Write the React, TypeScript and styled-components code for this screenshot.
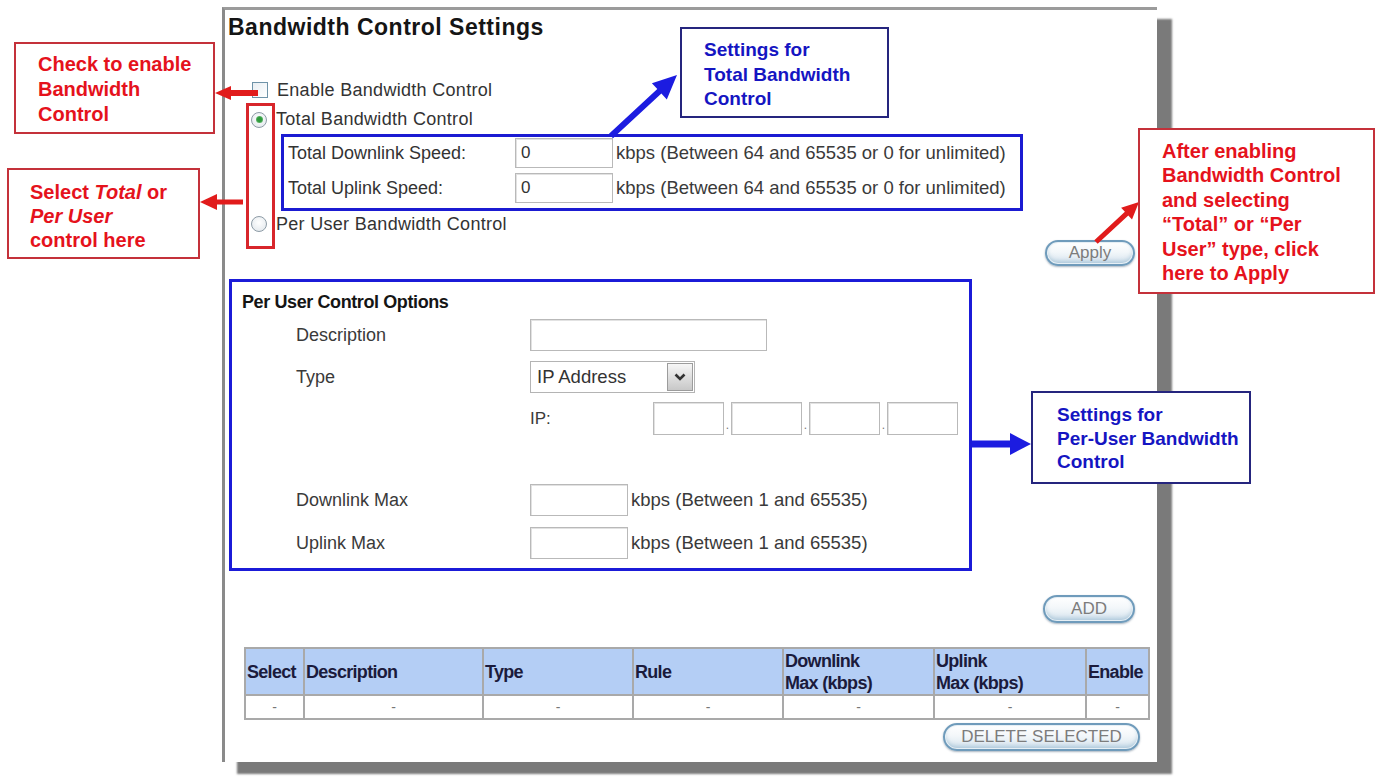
import React from 'react';
import styled, { createGlobalStyle } from 'styled-components';

const GlobalStyle = createGlobalStyle`
  html, body {
    margin: 0;
    padding: 0;
    background: #fff;
  }
  body {
    font-family: "Liberation Sans", Arial, sans-serif;
    color: #333;
  }
`;

// arrow polygon from (x1,y1) to the tip (x2,y2)
const arrowPoints = (
  x1: number,
  y1: number,
  x2: number,
  y2: number,
  w: number,
  L: number,
  h: number
): string => {
  const dx = x2 - x1;
  const dy = y2 - y1;
  const len = Math.hypot(dx, dy);
  const ux = dx / len;
  const uy = dy / len;
  const px = -uy;
  const py = ux;
  const bx = x2 - ux * L;
  const by = y2 - uy * L;
  const pts = [
    [x1 + (px * w) / 2, y1 + (py * w) / 2],
    [bx + (px * w) / 2, by + (py * w) / 2],
    [bx + px * h, by + py * h],
    [x2, y2],
    [bx - px * h, by - py * h],
    [bx - (px * w) / 2, by - (py * w) / 2],
    [x1 - (px * w) / 2, y1 - (py * w) / 2],
  ];
  return pts.map((p) => p.map((n) => n.toFixed(1)).join(',')).join(' ');
};

const arrows = [
  { color: '#e11b1b', pts: arrowPoints(258, 93, 215, 93, 6, 16, 7) },
  { color: '#e11b1b', pts: arrowPoints(243, 202, 200, 202, 5, 17, 8) },
  { color: '#1c1ce0', pts: arrowPoints(611, 136, 677, 75, 6, 24, 11) },
  { color: '#e11b1b', pts: arrowPoints(1096, 242, 1139, 202, 5, 17, 8) },
  { color: '#1c1ce0', pts: arrowPoints(972, 444, 1031, 444, 7, 21, 11) },
];

const App: React.FC = () => {
  return (
    <Page>
      <GlobalStyle />
      <Panel>
        <Title>Bandwidth Control Settings</Title>

        <OptionRow $top={34} $left={27} $h={30}>
          <Checkbox />
          <OptionText>Enable Bandwidth Control</OptionText>
        </OptionRow>
        <OptionRow $left={26} $h={29}>
          <Radio $on />
          <OptionText>Total Bandwidth Control</OptionText>
        </OptionRow>

        <TotalBox>
          <SpeedRow>
            <SpeedLabel>Total Downlink Speed:</SpeedLabel>
            <TextInput $w={98} $h={30} defaultValue="0" />
            <Unit>kbps (Between 64 and 65535 or 0 for unlimited)</Unit>
          </SpeedRow>
          <SpeedRow>
            <SpeedLabel>Total Uplink Speed:</SpeedLabel>
            <TextInput $w={98} $h={30} defaultValue="0" />
            <Unit>kbps (Between 64 and 65535 or 0 for unlimited)</Unit>
          </SpeedRow>
        </TotalBox>

        <OptionRow $left={26} $h={26}>
          <Radio />
          <OptionText>Per User Bandwidth Control</OptionText>
        </OptionRow>

        <ButtonRow $top={3} $right={22}>
          <PillButton $w={90} $h={26}>Apply</PillButton>
        </ButtonRow>

        <PerUserBox>
          <BoxTitle>Per User Control Options</BoxTitle>
          <FormRow $top={4} $h={32}>
            <FormLabel>Description</FormLabel>
            <TextInput $w={237} $h={32} />
          </FormRow>
          <FormRow $top={10} $h={32}>
            <FormLabel>Type</FormLabel>
            <SelectBox>
              <SelectText>IP Address</SelectText>
              <SelectArrow>
                <svg width="14" height="10" viewBox="0 0 14 10">
                  <path d="M2.5 2.5 L7 7 L11.5 2.5" fill="none" stroke="#333" strokeWidth="2.6" />
                </svg>
              </SelectArrow>
            </SelectBox>
          </FormRow>
          <FormRow $top={9} $h={33}>
            <FormLabel />
            <IpLabel>IP:</IpLabel>
            <TextInput $w={71} $h={33} />
            <IpDot>.</IpDot>
            <TextInput $w={71} $h={33} />
            <IpDot>.</IpDot>
            <TextInput $w={71} $h={33} />
            <IpDot>.</IpDot>
            <TextInput $w={71} $h={33} />
          </FormRow>
          <FormRow $top={49} $h={32}>
            <FormLabel>Downlink Max</FormLabel>
            <TextInput $w={98} $h={32} />
            <Unit>kbps (Between 1 and 65535)</Unit>
          </FormRow>
          <FormRow $top={11} $h={32}>
            <FormLabel>Uplink Max</FormLabel>
            <TextInput $w={98} $h={32} />
            <Unit>kbps (Between 1 and 65535)</Unit>
          </FormRow>
        </PerUserBox>

        <ButtonRow $top={24} $right={22}>
          <PillButton $w={92} $h={28}>ADD</PillButton>
        </ButtonRow>

        <RuleTable>
          <colgroup>
            <col style={{ width: 59 }} />
            <col style={{ width: 179 }} />
            <col style={{ width: 150 }} />
            <col style={{ width: 150 }} />
            <col style={{ width: 151 }} />
            <col style={{ width: 152 }} />
            <col style={{ width: 63 }} />
          </colgroup>
          <thead>
            <tr>
              <Th>Select</Th>
              <Th>Description</Th>
              <Th>Type</Th>
              <Th>Rule</Th>
              <Th>
                Downlink
                <br />
                Max (kbps)
              </Th>
              <Th>
                Uplink
                <br />
                Max (kbps)
              </Th>
              <Th>Enable</Th>
            </tr>
          </thead>
          <tbody>
            <tr>
              {Array.from({ length: 7 }).map((_, i) => (
                <Td key={i}>-</Td>
              ))}
            </tr>
          </tbody>
        </RuleTable>

        <ButtonRow $top={3} $right={17}>
          <PillButton $w={197} $h={28}>DELETE SELECTED</PillButton>
        </ButtonRow>
      </Panel>

      <RadioMarker />

      <Arrows width="1385" height="778" viewBox="0 0 1385 778">
        {arrows.map((a, i) => (
          <polygon key={i} points={a.pts} fill={a.color} />
        ))}
      </Arrows>

      <Callout $tone="red" $x={14} $y={42} $w={201} $h={92} $pt={8} $pl={22} $lh={25}>
        Check to enable
        <br />
        Bandwidth
        <br />
        Control
      </Callout>
      <Callout $tone="red" $x={7} $y={168} $w={193} $h={91} $pt={10} $pl={21} $lh={24}>
        Select <i>Total</i> or
        <br />
        <i>Per User</i>
        <br />
        control here
      </Callout>
      <Callout $tone="red" $x={1138} $y={128} $w={237} $h={166} $pt={9} $pl={22} $lh={24.4}>
        After enabling
        <br />
        Bandwidth Control
        <br />
        and selecting
        <br />
        “Total” or “Per
        <br />
        User” type, click
        <br />
        here to Apply
      </Callout>
      <Callout $tone="blue" $x={680} $y={27} $w={209} $h={91} $pt={9} $pl={22} $lh={24.5}>
        Settings for
        <br />
        Total Bandwidth
        <br />
        Control
      </Callout>
      <Callout $tone="blue" $x={1031} $y={391} $w={220} $h={93} $pt={10} $pl={24} $lh={23.5}>
        Settings for
        <br />
        Per-User Bandwidth
        <br />
        Control
      </Callout>
    </Page>
  );
};

// Styles
const Page = styled.div`
  position: relative;
  width: 1385px;
  height: 778px;
  overflow: hidden;
  background: #fff;
  padding: 7px 0 0 222px;
  box-sizing: border-box;
`;

const Panel = styled.div`
  width: 932px;
  height: 752px;
  border-top: 3px solid #9b9b9b;
  border-left: 3px solid #8a8a8a;
  background: #fff;
  box-shadow: 15px 12px 2px #7a7a7a;
  display: flex;
  flex-direction: column;
  align-items: flex-start;
`;

const Title = styled.h1`
  margin: 3px 0 0 3px;
  height: 28px;
  line-height: 28px;
  font-size: 23px;
  font-weight: bold;
  letter-spacing: 0.5px;
  color: #151515;
`;

const OptionRow = styled.div<{ $top?: number; $left: number; $h: number }>`
  display: flex;
  align-items: center;
  gap: 9px;
  height: ${(p) => p.$h}px;
  margin-top: ${(p) => p.$top ?? 0}px;
  margin-left: ${(p) => p.$left}px;
`;

const OptionText = styled.span`
  font-size: 18px;
  color: #333;
  letter-spacing: 0.3px;
`;

const Checkbox = styled.span`
  width: 16px;
  height: 16px;
  box-sizing: border-box;
  border: 1px solid #6f93a8;
  background: linear-gradient(135deg, #e9eef2, #ffffff);
`;

const Radio = styled.span<{ $on?: boolean }>`
  width: 16px;
  height: 16px;
  box-sizing: border-box;
  border-radius: 50%;
  border: 1px solid #8d9ba6;
  background: radial-gradient(circle at 50% 40%, #ffffff 0%, #dfe5ea 100%);
  display: inline-flex;
  align-items: center;
  justify-content: center;

  &::after {
    content: '';
    width: 7px;
    height: 7px;
    border-radius: 50%;
    background: ${(p) => (p.$on ? 'radial-gradient(circle, #2f9a3c 40%, #8fd09a 100%)' : 'transparent')};
  }
`;

const TotalBox = styled.div`
  margin-left: 56px;
  width: 742px;
  height: 77px;
  box-sizing: border-box;
  border: 3px solid #1b1bd2;
  padding: 1px 0 0 4px;
  display: flex;
  flex-direction: column;
  gap: 5px;
`;

const SpeedRow = styled.div`
  display: flex;
  align-items: center;
  height: 30px;
`;

const SpeedLabel = styled.span`
  width: 227px;
  font-size: 18px;
  color: #333;
`;

const TextInput = styled.input<{ $w: number; $h: number }>`
  width: ${(p) => p.$w}px;
  height: ${(p) => p.$h}px;
  box-sizing: border-box;
  border: 1px solid #b9b9b9;
  box-shadow: inset 1px 1px 0 #e2e2e2;
  padding: 0 5px;
  font-family: "Liberation Sans", Arial, sans-serif;
  font-size: 17px;
  color: #333;
  background: #fff;
  outline: none;
  flex: none;
`;

const Unit = styled.span`
  margin-left: 3px;
  font-size: 18.5px;
  color: #3a3a3a;
  white-space: nowrap;
`;

const ButtonRow = styled.div<{ $top: number; $right: number }>`
  align-self: flex-end;
  margin-top: ${(p) => p.$top}px;
  margin-right: ${(p) => p.$right}px;
  display: flex;
`;

const PillButton = styled.button<{ $w: number; $h: number }>`
  width: ${(p) => p.$w}px;
  height: ${(p) => p.$h}px;
  padding: 0;
  border-radius: 999px;
  border: 2px solid #6f9bbb;
  background: linear-gradient(#ffffff 0%, #f3f7fa 45%, #d6e4ee 100%);
  box-shadow: inset 0 0 0 1px #e6eff5, inset 0 -3px 4px rgba(95, 145, 180, 0.35), 0 1px 2px rgba(40, 70, 100, 0.4);
  font-family: "Liberation Sans", Arial, sans-serif;
  font-size: 17px;
  color: #7c7c7c;
  cursor: pointer;
`;

const PerUserBox = styled.div`
  margin-top: 13px;
  margin-left: 4px;
  width: 743px;
  height: 292px;
  box-sizing: border-box;
  border: 3px solid #1b1bd8;
  padding: 7px 0 0 10px;
  display: flex;
  flex-direction: column;
`;

const BoxTitle = styled.div`
  height: 26px;
  line-height: 26px;
  font-size: 18px;
  font-weight: bold;
  letter-spacing: -0.4px;
  color: #151515;
`;

const FormRow = styled.div<{ $top: number; $h: number }>`
  display: flex;
  align-items: center;
  height: ${(p) => p.$h}px;
  margin-top: ${(p) => p.$top}px;
  margin-left: 54px;
`;

const FormLabel = styled.span`
  width: 234px;
  flex: none;
  font-size: 18px;
  color: #3a3a3a;
`;

const SelectBox = styled.div`
  width: 165px;
  height: 32px;
  box-sizing: border-box;
  border: 1px solid #b4b4b4;
  display: flex;
  align-items: center;
  padding: 0 1px 0 6px;
  background: #fff;
`;

const SelectText = styled.span`
  font-size: 18.5px;
  color: #333;
`;

const SelectArrow = styled.span`
  margin-left: auto;
  width: 26px;
  height: 28px;
  box-sizing: border-box;
  border: 1px solid #9c9c9c;
  background: linear-gradient(#f6f6f6, #c8c8c8);
  display: flex;
  align-items: center;
  justify-content: center;
`;

const IpLabel = styled.span`
  width: 123px;
  flex: none;
  font-size: 17px;
  color: #3a3a3a;
`;

const IpDot = styled.span`
  width: 7px;
  align-self: flex-end;
  text-align: center;
  font-size: 12px;
  line-height: 12px;
  color: #777;
  margin-bottom: 4px;
`;

const RuleTable = styled.table`
  margin-top: 24px;
  margin-left: 19px;
  width: 904px;
  table-layout: fixed;
  border-collapse: collapse;
  border: 2px solid #a8a8a8;
`;

const Th = styled.th`
  height: 45px;
  padding: 0 1px;
  background: #b4cef5;
  border: 2px solid #a9a9a9;
  text-align: left;
  vertical-align: middle;
  font-size: 18px;
  font-weight: bold;
  letter-spacing: -0.7px;
  line-height: 22px;
  color: #1b1b3c;
  white-space: nowrap;
`;

const Td = styled.td`
  height: 22px;
  padding: 0;
  border: 2px solid #a9a9a9;
  text-align: center;
  font-size: 14px;
  color: #777;
`;

const RadioMarker = styled.div`
  position: absolute;
  left: 246px;
  top: 103px;
  width: 29px;
  height: 146px;
  box-sizing: border-box;
  border: 3px solid #d8262b;
  z-index: 2;
`;

const Arrows = styled.svg`
  position: absolute;
  left: 0;
  top: 0;
  pointer-events: none;
  z-index: 3;
`;

const Callout = styled.div<{
  $tone: 'red' | 'blue';
  $x: number;
  $y: number;
  $w: number;
  $h: number;
  $pt: number;
  $pl: number;
  $lh: number;
}>`
  position: absolute;
  left: ${(p) => p.$x}px;
  top: ${(p) => p.$y}px;
  width: ${(p) => p.$w}px;
  height: ${(p) => p.$h}px;
  box-sizing: border-box;
  padding: ${(p) => p.$pt}px 0 0 ${(p) => p.$pl}px;
  background: #fff;
  border: 2px solid ${(p) => (p.$tone === 'red' ? '#c4313a' : '#25257e')};
  color: ${(p) => (p.$tone === 'red' ? '#e5121c' : '#1515c2')};
  font-size: ${(p) => (p.$tone === 'red' ? 20 : 19)}px;
  font-weight: bold;
  line-height: ${(p) => p.$lh}px;
  white-space: nowrap;
  z-index: 4;
`;

export default App;
